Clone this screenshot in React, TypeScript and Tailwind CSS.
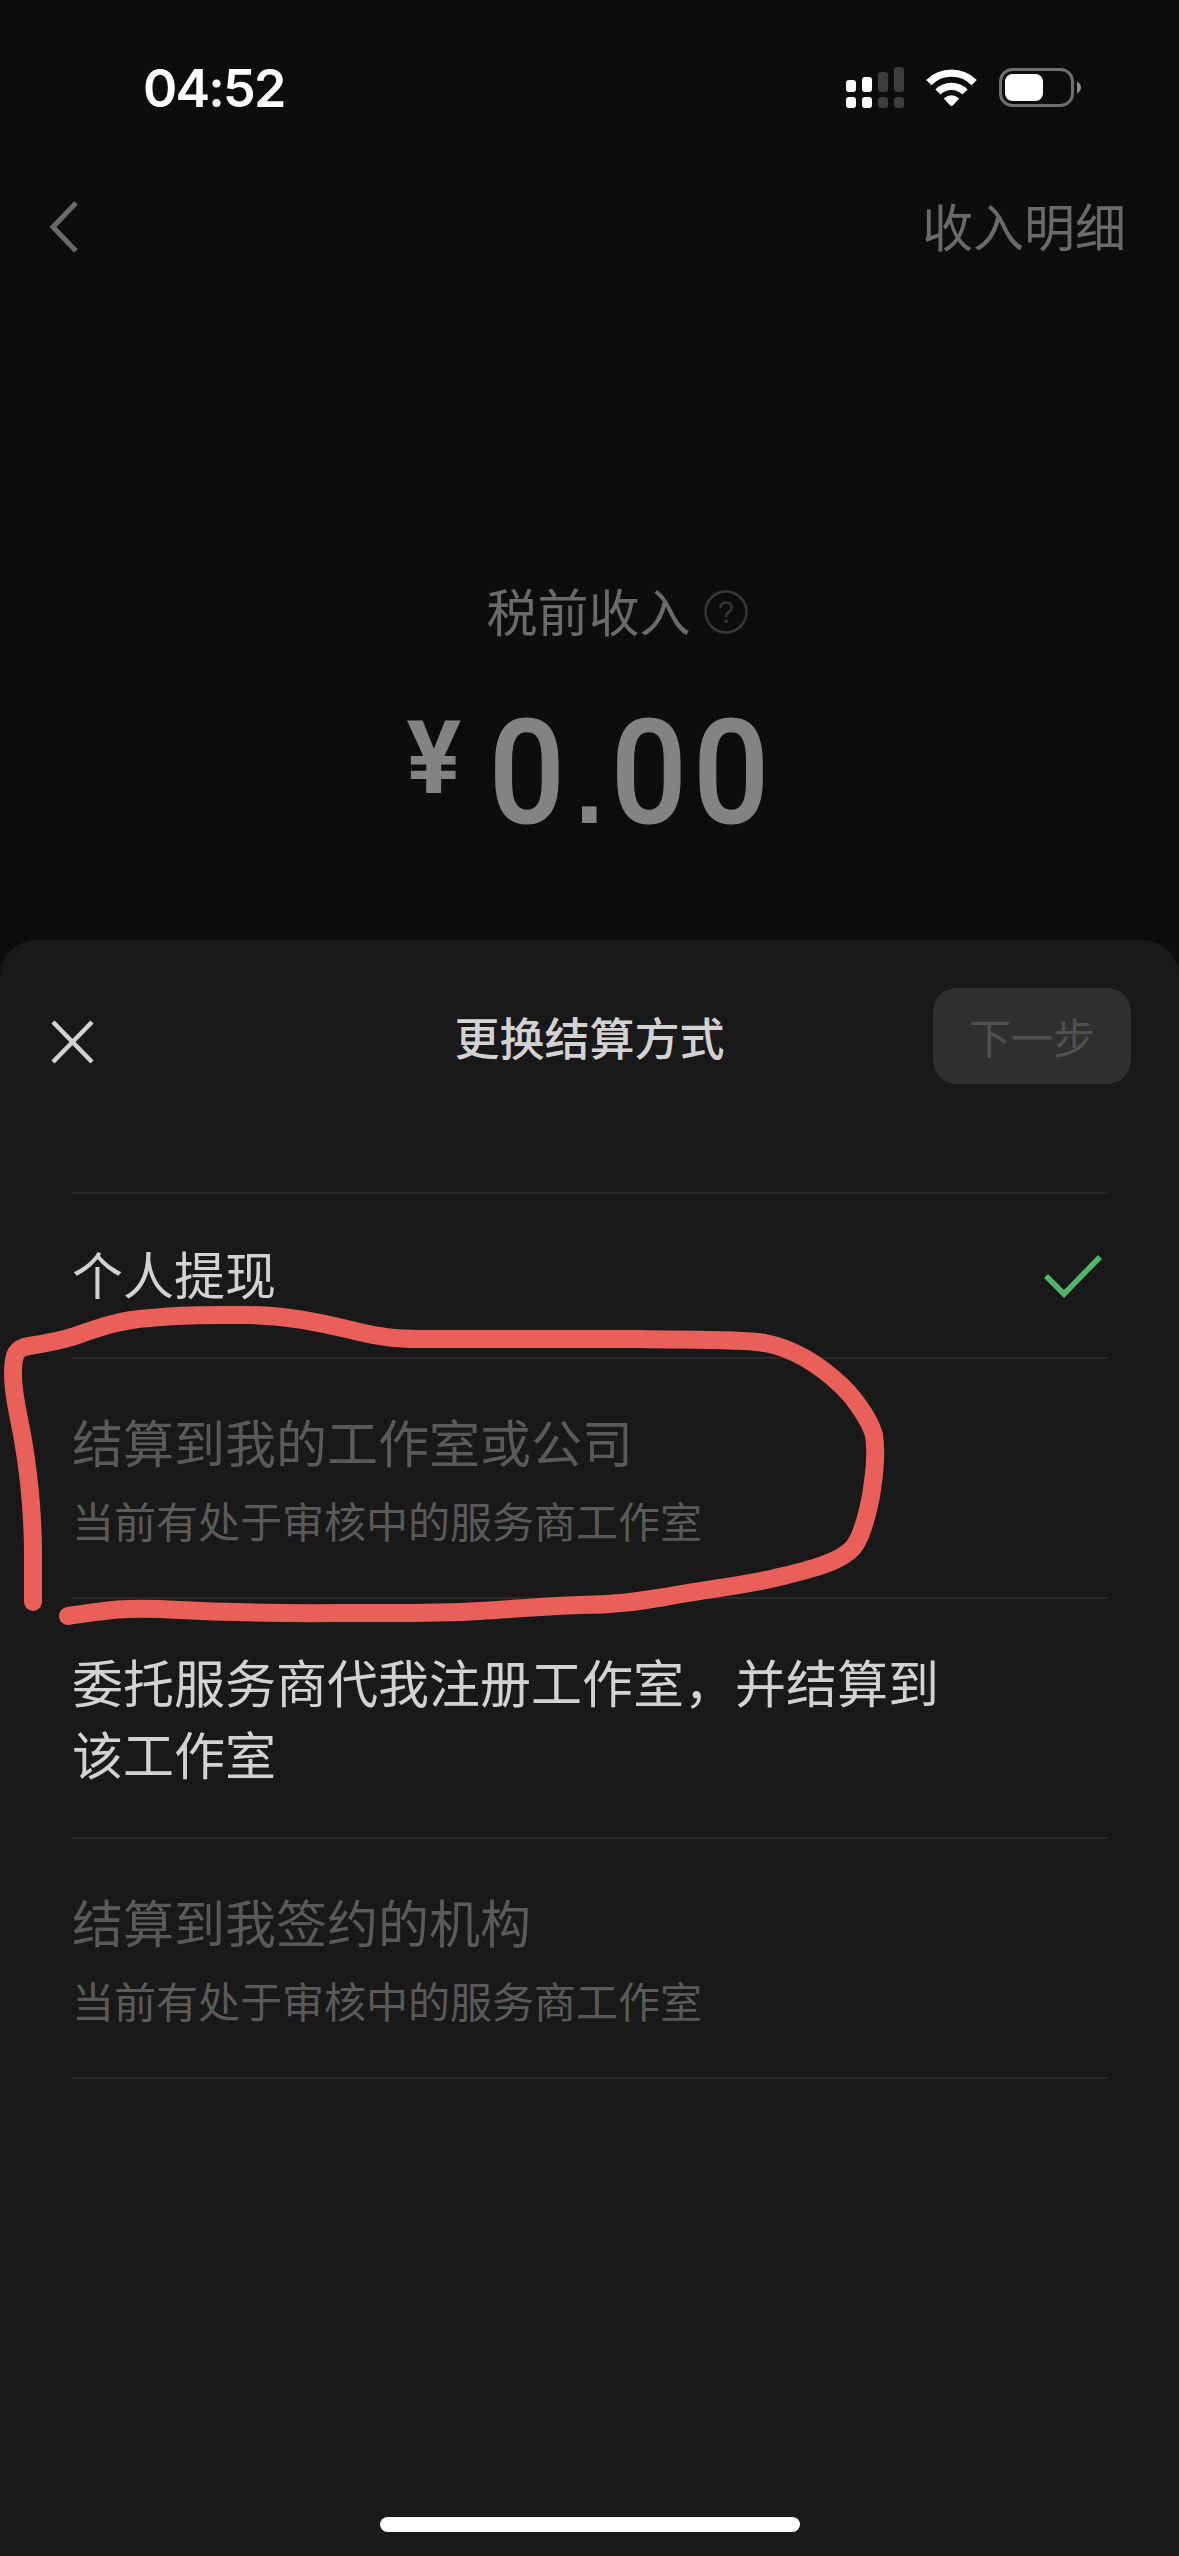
type Method = {
  title: string;
  note?: string;
  selected?: boolean;
  disabled?: boolean;
  box: string;
};

const methods: Method[] = [
  { title: '个人提现', selected: true, box: 'h-[165px] pb-[5px]' },
  { title: '结算到我的工作室或公司', note: '当前有处于审核中的服务商工作室', disabled: true, box: 'h-[240px] pt-[5px]' },
  { title: '委托服务商代我注册工作室，并结算到该工作室', box: 'h-[240px] pb-[2px]' },
  { title: '结算到我签约的机构', note: '当前有处于审核中的服务商工作室', disabled: true, box: 'h-[240px] pt-[5px]' },
];

function SignalIcon() {
  return (
    <svg width="58" height="42" viewBox="0 0 58 42">
      <g fill="#fff">
        <rect x="0" y="13" width="10" height="12" rx="3" />
        <rect x="16" y="10" width="10" height="15" rx="3" />
        <rect x="0" y="30" width="10" height="11" rx="3" />
        <rect x="16" y="30" width="10" height="11" rx="3" />
      </g>
      <g fill="#3d3d3d">
        <rect x="32" y="5" width="10" height="20" rx="3" />
        <rect x="48" y="0" width="10" height="25" rx="3" />
        <rect x="32" y="30" width="10" height="11" rx="3" />
        <rect x="48" y="30" width="10" height="11" rx="3" />
      </g>
    </svg>
  );
}

function WifiIcon() {
  return (
    <svg width="51" height="38" viewBox="0 0 51 38" fill="none" stroke="#fff" strokeWidth="7.4">
      <path d="M2.8 13.6 A32 32 0 0 1 48.2 13.6" />
      <path d="M12 23 A19 19 0 0 1 39 23" />
      <path d="M17.8 29.6 Q25.5 23 33.2 29.6 L27 36.3 Q25.5 37.8 24 36.3 Z" fill="#fff" stroke="none" />
    </svg>
  );
}

function BatteryIcon() {
  return (
    <svg width="83" height="40" viewBox="0 0 83 40">
      <rect x="1.5" y="1.5" width="72" height="36" rx="12" fill="none" stroke="#6f6f6f" strokeWidth="3" />
      <rect x="6" y="6" width="38" height="27" rx="7.5" fill="#fff" />
      <path d="M78 13.5 Q82 16 82 19.5 Q82 23 78 25.5 Z" fill="#8a8a8a" />
    </svg>
  );
}

// Hand-drawn marker stroke around the second option
function MarkerStroke() {
  return (
    <svg
      className="absolute left-0 top-[1290px] pointer-events-none"
      width="900"
      height="350"
      viewBox="0 1290 900 350"
      fill="none"
      stroke="#e95f5a"
      strokeWidth="18"
      strokeLinecap="round"
      strokeLinejoin="round"
    >
      <path d="M33 1602 L33 1555 C33 1515 29 1475 23 1440 C18 1412 13 1395 13 1374 C13 1354 16 1348 29 1346 C48 1343 60 1341 75 1336 C100 1327 120 1320 150 1318 C185 1314 215 1315 245 1315 C290 1315 325 1324 355 1331 C380 1337 395 1339 420 1339 L640 1339 C690 1340 740 1339 765 1343 C797 1349 822 1367 843 1387 C857 1401 870 1421 874 1435 C877 1455 874 1476 871 1496 C868 1511 863 1533 855 1545 C844 1562 805 1571 775 1578 C735 1587 700 1590 665 1597 C640 1601 615 1605 580 1605 C545 1606 515 1609 480 1611 C430 1614 390 1613 340 1613 C250 1614 200 1611 160 1609 C115 1608 110 1610 68 1616" />
    </svg>
  );
}

function MethodRow({ title, note, selected, disabled, box }: Method) {
  return (
    <li className={`${box} flex items-center justify-between border-b-2 border-[#292929]`}>
      <div className={disabled ? 'text-[#5a5a5a]' : 'text-[#d2d2d2]'}>
        <p className="w-[880px] text-[51px] leading-[72px]">{title}</p>
        {note && <p className="mt-[7px] text-[42px] leading-[72px]">{note}</p>}
      </div>
      {selected && (
        <svg className="mr-1.5 mt-1.5 shrink-0" width="58" height="44" viewBox="0 0 58 44" fill="none" stroke="#52b56c" strokeWidth="5.5">
          <path d="M2 22 L20 40 L56 3" />
        </svg>
      )}
    </li>
  );
}

export default function App() {
  return (
    <div className="relative flex h-[2556px] w-[1179px] flex-col overflow-hidden bg-[#0d0d0d] font-['Noto_Sans_CJK_SC',sans-serif]">
      <div className="flex h-[158px] items-center justify-between pl-[143px] pr-[97px] pt-[18px]">
        <span className="mt-0.5 font-['Inter',sans-serif] text-[52px] font-semibold leading-none tracking-[-1.8px] text-white">04:52</span>
        <div className="flex items-center">
          <SignalIcon />
          <span className="ml-[22px]"><WifiIcon /></span>
          <span className="ml-[22px]"><BatteryIcon /></span>
        </div>
      </div>

      <header className="flex h-[138px] items-center justify-between pl-[50px] pr-[53px] text-[#6a6a6a]">
        <svg width="28" height="52" viewBox="0 0 28 52" fill="none" stroke="currentColor" strokeWidth="5">
          <path d="M26 2 L3 26 L26 50" />
        </svg>
        <span className="-mt-1 text-[51px] leading-[72px]">收入明细</span>
      </header>

      <section className="flex h-[644px] flex-col items-center pt-[278px]">
        <div className="flex items-center gap-[13px] pl-[55px] text-[51px] leading-[72px] text-[#6a6a6a]">
          <span>税前收入</span>
          <svg className="mt-1" width="44" height="44" viewBox="0 0 44 44" fill="none" stroke="#373737" strokeWidth="2.5">
            <circle cx="22" cy="22" r="20.5" />
            <path d="M16.5 18 Q16.5 12.5 22 12.5 Q27.5 12.5 27.5 17.5 Q27.5 20 24.5 22.3 Q22 24.2 22 27" />
            <circle cx="22" cy="31.2" r="0.8" />
          </svg>
        </div>
        <div className="mt-12 flex items-start pl-7 font-['Roboto',sans-serif] text-[#838383]">
          <span className="mt-1 text-[102px] font-bold leading-[120px]">¥</span>
          <span className="ml-7 mt-1 origin-left scale-x-[0.92] text-[145px] font-medium leading-[150px] tracking-[7px] [-webkit-text-stroke:1.2px_#838383]">
            0<span className="ml-1 font-['Liberation_Sans',sans-serif] text-[112px] font-bold tracking-[8px] [-webkit-text-stroke:0px]">.</span>00
          </span>
        </div>
      </section>

      <main className="flex flex-1 flex-col rounded-t-[36px] bg-[#191919]">
        <div className="flex h-[192px] items-center justify-between pl-[51px] pr-12">
          <svg className="mt-3" width="43" height="44" viewBox="0 0 43 44" fill="none" stroke="#d2d2d2" strokeWidth="4.5">
            <path d="M2 2 L41 42 M41 2 L2 42" />
          </svg>
          <h1 className="ml-[152px] mt-0.5 text-[45px] font-medium leading-[72px] text-[#d2d2d2]">更换结算方式</h1>
          <button className="h-24 w-[198px] rounded-3xl bg-[#303030] text-[42px] leading-[90px] text-[#505050]">下一步</button>
        </div>
        <ul className="ml-[72px] mr-[71px] mt-15 border-t-2 border-[#292929]">
          {methods.map((m) => (
            <MethodRow key={m.title} {...m} />
          ))}
        </ul>
        <div className="mx-auto mb-6 mt-auto h-[15px] w-[420px] rounded-full bg-white" />
      </main>

      <MarkerStroke />
    </div>
  );
}
